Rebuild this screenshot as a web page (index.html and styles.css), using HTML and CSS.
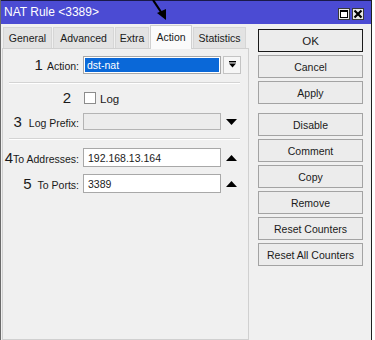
FILE: index.html
```html
<!DOCTYPE html>
<html>
<head>
<meta charset="utf-8">
<link rel="stylesheet" href="styles.css">
</head>
<body>
<div class="window">
  <div class="titlebar">
    <span class="title">NAT Rule &lt;3389&gt;</span>
    <div class="tb-btns">
      <span class="tb-btn"><span class="max-icon"></span></span>
      <span class="tb-btn close">
        <svg width="10" height="10" viewBox="0 0 10 10"><path d="M1.5 1.5 L8.5 8.5 M8.5 1.5 L1.5 8.5" stroke="#000" stroke-width="2.2"/></svg>
      </span>
    </div>
  </div>
  <div class="content">
    <div class="left">
      <div class="tabs">
        <div class="tab t-general">General</div>
        <div class="tab t-advanced">Advanced</div>
        <div class="tab t-extra">Extra</div>
        <div class="tab t-action active">Action</div>
        <div class="tab t-stats">Statistics</div>
      </div>
      <div class="panel">
        <div class="row">
          <div class="lbl"><span class="num g4">1</span>Action:</div>
          <div class="select"><span class="sel-hl">dst-nat</span></div>
          <div class="dd-btn">
            <svg width="9" height="9" viewBox="0 0 9 9"><rect x="1" y="1" width="7" height="1.4" fill="#000"/><path d="M1 3.5 H8 L4.5 7.5 Z" fill="#000"/></svg>
          </div>
        </div>
        <div class="sep"></div>
        <div class="row r2">
          <div class="lbl"><span class="num g8">2</span></div>
          <div class="chk"></div>
          <span class="chk-lbl">Log</span>
        </div>
        <div class="row r3">
          <div class="lbl"><span class="num g7">3</span>Log Prefix:</div>
          <div class="input disabled"></div>
          <div class="arrow">
            <svg width="11" height="6" viewBox="0 0 11 6"><path d="M0 0 H11 L5.5 6 Z" fill="#000"/></svg>
          </div>
        </div>
        <div class="sep s2"></div>
        <div class="row r4">
          <div class="lbl"><span class="num g0">4</span>To Addresses:</div>
          <div class="input">192.168.13.164</div>
          <div class="arrow">
            <svg width="11" height="6" viewBox="0 0 11 6"><path d="M0 6 H11 L5.5 0 Z" fill="#000"/></svg>
          </div>
        </div>
        <div class="row r5">
          <div class="lbl"><span class="num g6">5</span>To Ports:</div>
          <div class="input">3389</div>
          <div class="arrow">
            <svg width="11" height="6" viewBox="0 0 11 6"><path d="M0 6 H11 L5.5 0 Z" fill="#000"/></svg>
          </div>
        </div>
      </div>
    </div>
    <div class="buttons">
      <div class="btn default">OK</div>
      <div class="btn">Cancel</div>
      <div class="btn">Apply</div>
      <div class="btn spaced">Disable</div>
      <div class="btn">Comment</div>
      <div class="btn">Copy</div>
      <div class="btn">Remove</div>
      <div class="btn">Reset Counters</div>
      <div class="btn">Reset All Counters</div>
    </div>
  </div>
</div>
<svg class="annot" width="40" height="26" viewBox="0 0 40 26">
  <path d="M3 0 L11 12" stroke="#000" stroke-width="2.2" fill="none"/>
  <path d="M7 13 L16 9 L16 20 Z" fill="#000"/>
</svg>
</body>
</html>
```
FILE: styles.css
```css
html, body {
  margin: 0;
  padding: 0;
}
body {
  background: #ffffff;
  font-family: "Liberation Sans", Arial, sans-serif;
  font-size: 10.5px;
  color: #1a1a1a;
  position: relative;
  width: 375px;
  height: 340px;
  overflow: hidden;
}
.window {
  width: 372px;
  height: 340px;
  box-sizing: border-box;
  border-left: 1px solid #6a6a6a;
  border-right: 1px solid #202020;
  background: #f0f0f0;
}
.titlebar {
  height: 24px;
  box-sizing: border-box;
  border-top: 1px solid #1a1a4a;
  background: #4b4bd3;
  display: flex;
  align-items: center;
  justify-content: space-between;
  padding: 0 7px 0 3px;
  color: #ffffff;
  font-size: 12px;
}
.title {
  margin-top: -1px;
}
.tb-btns {
  display: flex;
  gap: 2px;
  margin-top: 2px;
}
.tb-btn {
  width: 12px;
  height: 12px;
  box-sizing: border-box;
  background: #e9e9e9;
  border: 1px solid #3a3a3a;
  display: flex;
  align-items: center;
  justify-content: center;
}
.max-icon {
  width: 8px;
  height: 8px;
  box-sizing: border-box;
  border: 1px solid #000;
  border-top-width: 2px;
  background: #ffffff;
}
.content {
  display: flex;
}
.left {
  margin-left: 1px;
  width: 247px;
}
.tabs {
  display: flex;
  align-items: flex-end;
  height: 24px;
  padding-left: 1px;
  gap: 1px;
}
.tab {
  height: 21px;
  box-sizing: border-box;
  border: 1px solid #d6d6d6;
  border-bottom: none;
  background: #e3e3e3;
  display: flex;
  align-items: center;
  justify-content: center;
}
.t-general { width: 49px; }
.t-advanced { width: 61px; }
.t-extra { width: 34px; }
.t-action { width: 42px; }
.t-stats { width: 53px; }
.tab.active {
  height: 24px;
  background: #fbfbfb;
  border-color: #d0d0d0;
  margin-bottom: -1px;
  padding-bottom: 2px;
  position: relative;
  z-index: 1;
}
.panel {
  height: 292px;
  box-sizing: border-box;
  border: 1px solid #d0d0d0;
  background: #f0f0f0;
  padding-top: 6px;
}
.row {
  display: flex;
  align-items: center;
  height: 19px;
}
.lbl {
  width: 76px;
  text-align: right;
  flex: none;
  white-space: nowrap;
}
.num {
  font-size: 15px;
  color: #1a1a1a;
}
.g0 { margin-right: 0; }
.g4 { margin-right: 4px; }
.g6 { margin-right: 6px; }
.g7 { margin-right: 7px; }
.g8 { margin-right: 8px; }
.select {
  margin-left: 4px;
  width: 138px;
  height: 18px;
  box-sizing: border-box;
  border: 1px solid #a8a8a8;
  background: #ffffff;
  padding: 1px;
  display: flex;
}
.sel-hl {
  flex: 1;
  background: #0a68d8;
  color: #ffffff;
  padding-left: 2px;
  line-height: 14px;
}
.dd-btn {
  margin-left: 2px;
  width: 18px;
  height: 18px;
  box-sizing: border-box;
  border: 1px solid #c4c4c4;
  background: #f6f6f6;
  display: flex;
  align-items: center;
  justify-content: center;
}
.sep {
  margin: 8px 8px 0 6px;
  border-top: 1px solid #d4d4d4;
  border-bottom: 1px solid #ffffff;
}
.sep.s2 {
  margin-top: 7px;
}
.r2 {
  margin-top: 4px;
}
.chk {
  margin-left: 5px;
  width: 12px;
  height: 12px;
  box-sizing: border-box;
  border: 1px solid #8c8c8c;
  background: #ffffff;
}
.chk-lbl {
  margin-left: 4px;
  font-size: 11.5px;
  margin-top: 2px;
}
.r3 {
  margin-top: 5px;
}
.input {
  margin-left: 4px;
  width: 138px;
  height: 19px;
  box-sizing: border-box;
  border: 1px solid #a8a8a8;
  background: #ffffff;
  padding-left: 4px;
  display: flex;
  align-items: center;
}
.input.disabled {
  height: 17px;
  background: #ececec;
  border-color: #b4b4b4;
}
.arrow {
  margin-left: 5px;
  width: 11px;
  height: 6px;
  display: flex;
}
.r4 {
  margin-top: 8px;
}
.r5 {
  margin-top: 7px;
}
.buttons {
  margin-left: 9px;
  padding-top: 5px;
  width: 105px;
  display: flex;
  flex-direction: column;
  gap: 3px;
}
.btn {
  height: 23px;
  box-sizing: border-box;
  border: 1px solid #a3a3a3;
  background: #ececec;
  display: flex;
  align-items: center;
  justify-content: center;
  font-size: 10.5px;
  color: #1a1a1a;
}
.btn.default {
  border-color: #1a1a1a;
  font-size: 11.5px;
}
.btn.spaced {
  margin-top: 6px;
}
.annot {
  position: absolute;
  left: 150px;
  top: 0;
}
```
